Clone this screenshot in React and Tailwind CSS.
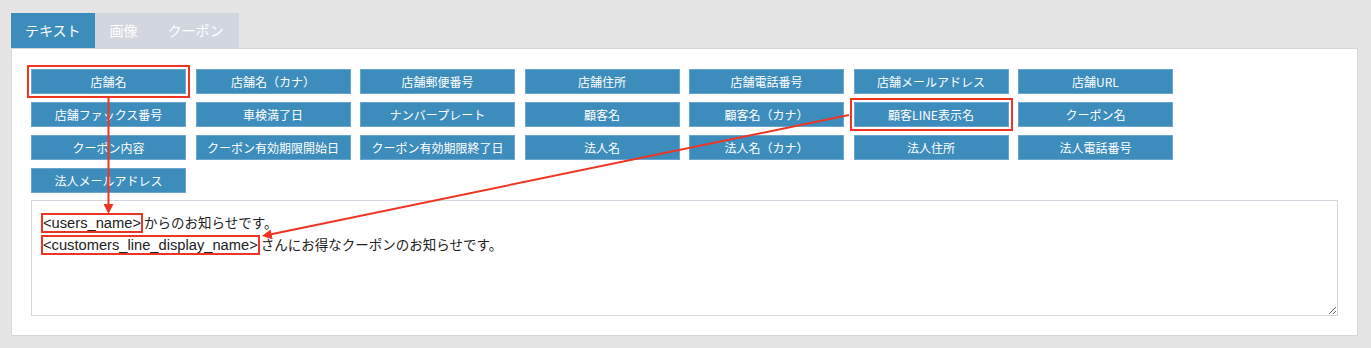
import React from "react";

const rows = [
  "店舗名", "店舗名（カナ）", "店舗郵便番号", "店舗住所", "店舗電話番号", "店舗メールアドレス", "店舗URL",
  "店舗ファックス番号", "車検満了日", "ナンバープレート", "顧客名", "顧客名（カナ）", "顧客LINE表示名", "クーポン名",
  "クーポン内容", "クーポン有効期限開始日", "クーポン有効期限終了日", "法人名", "法人名（カナ）", "法人住所", "法人電話番号",
  "法人メールアドレス",
];

const highlighted = new Set([0, 12]);

const latin = { fontFamily: '"Liberation Sans", Arial, sans-serif' };

export default function App() {
  return (
    <div
      className="relative w-full h-[348px] bg-[#e5e5e5] pt-[13px] pl-[11px] pr-[13px]"
      style={{ fontFamily: '"Noto Sans CJK JP", sans-serif' }}
    >
      <div className="flex h-[35px]">
        <div className="h-full px-[14px] flex items-center bg-[#3c8dbc] text-white text-[14px]">テキスト</div>
        <div className="flex h-full bg-[#d2d6de]">
          <div className="h-full px-[15px] flex items-center text-white text-[14px]">画像</div>
          <div className="h-full px-[15px] flex items-center text-white text-[14px]">クーポン</div>
        </div>
      </div>
      <div className="bg-white border border-[#d6d8df] pt-[20px] pl-[19px] pr-[19px] pb-[19px]">
        <div className="grid grid-cols-[repeat(7,155px)] gap-x-[9.5px] gap-y-[8px]">
          {rows.map((label, i) => (
            <div
              key={i}
              className={
                "h-[25px] flex items-center justify-center bg-[#3c8dbc] border border-[#6aa5cd] text-white text-[12px] leading-none " +
                (highlighted.has(i) ? "outline-2 outline-offset-2 outline-[#ee3524]" : "")
              }
            >
              {label}
            </div>
          ))}
        </div>
        <div className="mt-[7px] h-[116px] border border-[#d2d6de] pt-[11px] pl-[11px] text-[13.5px] leading-[21px] text-[#222] resize overflow-auto">
          <div>
            <span className="text-[14.7px] outline-2 outline-[#ee3524]" style={latin}>&lt;users_name&gt;</span> からのお知らせです。
          </div>
          <div>
            <span className="text-[14.7px] outline-2 outline-[#ee3524]" style={latin}>&lt;customers_line_display_name&gt;</span> さんにお得なクーポンのお知らせです。
          </div>
        </div>
      </div>
      <svg
        className="absolute left-0 top-0 pointer-events-none"
        width="1371"
        height="348"
        viewBox="0 0 1371 348"
      >
        <line x1="108.5" y1="98" x2="108.5" y2="206" stroke="#ee3524" strokeWidth="2" />
        <polygon points="103.5,204 113.5,204 108.5,214" fill="#ee3524" />
        <line x1="849" y1="115" x2="270" y2="234.4" stroke="#ee3524" strokeWidth="2" />
        <polygon points="262,236 272.6,239.3 270.5,229.5" fill="#ee3524" />
      </svg>
    </div>
  );
}
